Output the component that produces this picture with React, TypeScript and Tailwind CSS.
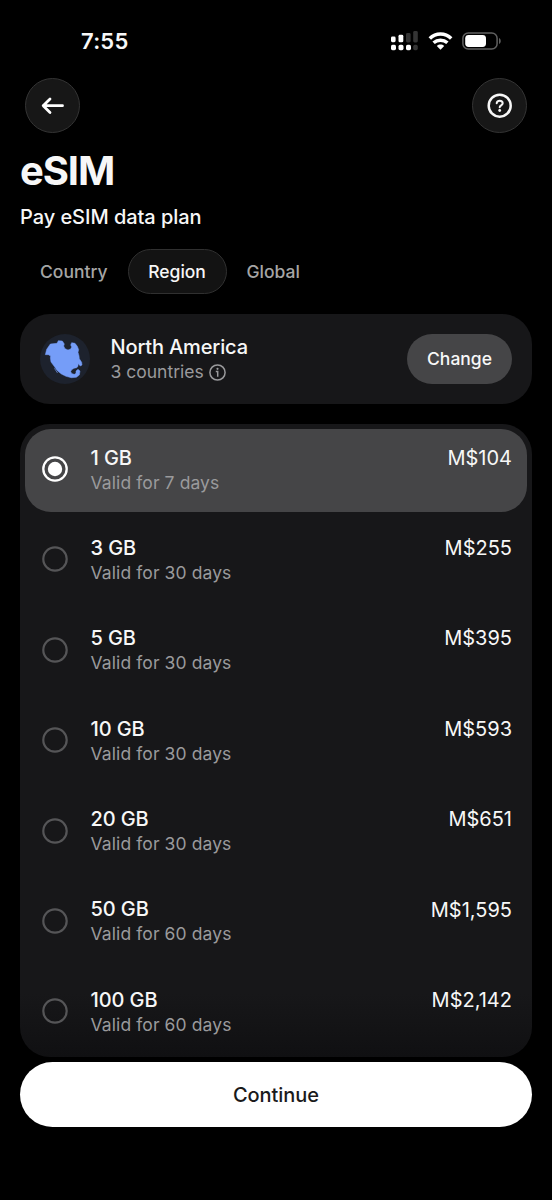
const tabs = ['Country', 'Region', 'Global']

const plans = [
  { size: '1 GB', days: 7, price: 'M$104' },
  { size: '3 GB', days: 30, price: 'M$255' },
  { size: '5 GB', days: 30, price: 'M$395' },
  { size: '10 GB', days: 30, price: 'M$593' },
  { size: '20 GB', days: 30, price: 'M$651' },
  { size: '50 GB', days: 60, price: 'M$1,595' },
  { size: '100 GB', days: 60, price: 'M$2,142' },
]

function StatusBar() {
  return (
    <div className="flex h-[78px] shrink-0 items-start justify-between pt-[26px] pr-[50px] pl-[81px]">
      <span className="text-[22px] leading-[30px] font-semibold tracking-[0.2px]">7:55</span>
      <div className="flex items-center pt-[5px]">
        <svg className="mr-[10px]" width="27" height="20" viewBox="0 0 27 20">
          <g fill="#fff">
            <rect x="0" y="5.5" width="4.6" height="5.7" rx="1.4" />
            <rect x="7.5" y="3.8" width="4.8" height="7.5" rx="1.4" />
            <rect x="0" y="13.8" width="5" height="5.4" rx="1.6" />
            <rect x="7.5" y="13.8" width="5" height="5.4" rx="1.6" />
            <rect x="15" y="13.8" width="5" height="5.4" rx="1.6" />
          </g>
          <g fill="#343434">
            <rect x="15" y="2" width="4.6" height="9.5" rx="1.4" />
            <rect x="22.2" y="0" width="4.6" height="11.5" rx="1.4" />
            <rect x="22.2" y="13.8" width="4.6" height="5.4" rx="1.6" />
          </g>
        </svg>
        <svg className="mr-[9px]" width="25" height="18" viewBox="0 0 25 18">
          <g fill="none" stroke="#fff" strokeWidth="3.5">
            <path d="M1.8 6.6C7.8 0.6 17.2 0.6 23.2 6.6" />
            <path d="M5.6 10.8C9.5 7.3 15.5 7.3 19.4 10.8" />
          </g>
          <path d="M8.8 14C11 12.1 14 12.1 16.2 14L12.5 17.8Z" fill="#fff" />
        </svg>
        <svg width="40" height="18" viewBox="0 0 40 18">
          <rect x="0.9" y="0.9" width="34.2" height="16.2" rx="5.4" fill="none" stroke="#606060" strokeWidth="1.5" />
          <rect x="3.2" y="3.1" width="20.8" height="11.8" rx="3.4" fill="#fff" />
          <path d="M37 6C39.3 7 39.3 11 37 12Z" fill="#606060" />
        </svg>
      </div>
    </div>
  )
}

function RoundButton({ label, children }: { label: string; children: React.ReactNode }) {
  return (
    <button
      aria-label={label}
      className="flex h-[55px] w-[55px] items-center justify-center rounded-full border border-[#343434] bg-[#171717]"
    >
      {children}
    </button>
  )
}

function RegionIcon() {
  return (
    <svg width="50" height="50" viewBox="0 0 150 150" className="shrink-0">
      <circle cx="75" cy="75" r="75" fill="#1d222d" />
      <path
        fill="#759df8"
        d="M16 62L20 46L31 30L51 28L55 20L67 21L73 30L71 36L75 44L84 48L92 45L95 39L92 33L95 26L105 28L112 37L116 47L114 55L117 65L118 74L125 85L126 93L121 96L114 89L114 97L110 101L102 103L95 107L92 113L96 119L103 121L108 118L108 111L114 106L120 111L118 123L109 130L94 131L78 127L64 120L52 110L42 96L33 84L31 72L32 66L25 62Z"
        stroke="#759df8"
        strokeWidth="1.5"
        strokeLinejoin="round"
      />
      <path d="M44 104L52 116" stroke="#759df8" strokeWidth="2" strokeLinecap="round" />
    </svg>
  )
}

function InfoIcon() {
  return (
    <svg width="17" height="17" viewBox="0 0 17 17" fill="none" stroke="#9a9a9c" strokeWidth="1.5">
      <circle cx="8.5" cy="8.5" r="7.6" />
      <path d="M6.8 7.4H8.7V12.8" />
      <circle cx="8.5" cy="4.8" r="1.1" fill="#9a9a9c" stroke="none" />
    </svg>
  )
}

function Radio({ checked }: { checked: boolean }) {
  return (
    <svg width="26" height="26" viewBox="0 0 26 26" fill="none" className="shrink-0">
      <circle cx="13" cy="13" r="11.7" stroke={checked ? '#fff' : '#555557'} strokeWidth={checked ? 2.3 : 2.2} />
      {checked && <circle cx="13" cy="13" r="7.2" fill="#fff" />}
    </svg>
  )
}

export default function App() {
  return (
    <div className="flex h-[1200px] w-[552px] flex-col overflow-hidden bg-black font-[Inter,sans-serif] text-[#f7f7f7]">
      <StatusBar />

      <div className="flex justify-between px-[25px]">
        <RoundButton label="Back">
          <svg width="24" height="20" viewBox="0 0 24 20" fill="none" stroke="#fff" strokeWidth="2.8" strokeLinecap="round" strokeLinejoin="round">
            <path d="M9 3L2.2 9.7L9 16.4M2.2 9.7H21.5" />
          </svg>
        </RoundButton>
        <RoundButton label="Help">
          <svg width="26" height="26" viewBox="0 0 26 26" fill="none" stroke="#f7f7f7" strokeLinecap="round">
            <circle cx="12.7" cy="12.7" r="11" strokeWidth="2.5" />
            <path d="M9.7 10.3C9.7 6.8 15.7 7 15.7 10.2C15.7 12.3 12.7 12.3 12.7 14.3" strokeWidth="2" />
            <circle cx="12.7" cy="17.5" r="1.4" fill="#f7f7f7" stroke="none" />
          </svg>
        </RoundButton>
      </div>

      <div className="px-5">
        <h1 className="mt-[13px] text-[40px] leading-[50px] font-bold tracking-[-1.1px]">eSIM</h1>
        <p className="mt-[7px] text-[20px] leading-[28px] font-medium tracking-[-0.05px]">Pay eSIM data plan</p>

        <div className="mt-[18px] flex h-[45px] items-center text-[17.5px] font-medium">
          {tabs.map((tab) => (
            <button
              key={tab}
              className={
                tab === 'Region'
                  ? 'h-[45px] w-[99px] rounded-full border border-[#303030] bg-[#131313] pt-px text-[#f7f7f7]'
                  : 'h-[45px] px-5 pt-px text-[#a5a5a5]'
              }
            >
              {tab}
            </button>
          ))}
        </div>

        <div className="mt-5 flex h-[90px] items-center rounded-[30px] bg-[#171719] px-5">
          <RegionIcon />
          <div className="ml-[20.5px] flex-1">
            <p className="pt-px text-[20px] leading-[25px] font-medium tracking-[-0.15px]">North America</p>
            <p className="flex items-center gap-[5px] text-[17.5px] leading-[24px] text-[#9a9a9c]">
              3 countries
              <InfoIcon />
            </p>
          </div>
          <button className="h-[50px] w-[105px] rounded-full bg-[#454547] text-[17.5px] font-medium">Change</button>
        </div>

        <div className="mt-5 flex h-[633px] flex-col gap-[7.4px] rounded-[30px] bg-linear-to-b from-[#171719] from-90% to-[#101012] p-[5px]">
          {plans.map((plan, i) => (
            <div
              key={plan.size}
              className={
                i === 0
                  ? 'flex h-[83px] shrink-0 rounded-[26px] bg-[#454547] pt-[15px] pr-[15px] pl-[17px]'
                  : 'flex h-[83px] shrink-0 pt-[15px] pr-[15px] pl-[17px]'
              }
            >
              <div className="pt-[12.1px]">
                <Radio checked={i === 0} />
              </div>
              <div className="ml-[22.5px] flex-1 pt-[1.5px]">
                <p className="text-[20px] leading-[25px] font-medium tracking-[-0.1px]">{plan.size}</p>
                <p className="text-[17.5px] leading-[24px] tracking-[0.1px] text-[#9a9a9c]">Valid for {plan.days} days</p>
              </div>
              <p className="pt-[0.6px] text-[20px] leading-[26px]">{plan.price}</p>
            </div>
          ))}
        </div>

        <button className="mt-[5px] h-[65px] w-full rounded-full bg-white text-[20px] font-medium tracking-[-0.05px] text-[#1a1a1b]">
          Continue
        </button>
      </div>
    </div>
  )
}
